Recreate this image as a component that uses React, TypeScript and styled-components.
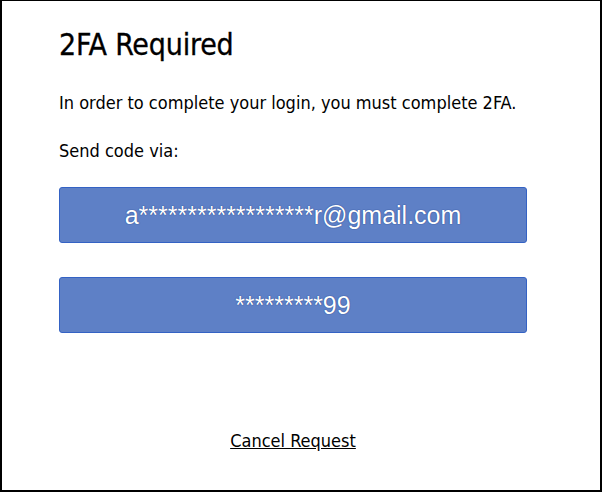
import React from 'react';
import styled, { createGlobalStyle } from 'styled-components';

const GlobalStyle = createGlobalStyle`
  html, body {
    margin: 0;
    padding: 0;
    background: #fff;
  }
`;

const Frame = styled.div`
  box-sizing: border-box;
  width: 602px;
  height: 492px;
  border: 2px solid #000;
  border-top-width: 1px;
  background: #fff;
  padding: 26px 0 0 57px;
  font-family: "DejaVu Sans Condensed", "DejaVu Sans", sans-serif;
  color: #000;
`;

const Content = styled.div`
  width: 468px;
  display: flex;
  flex-direction: column;
`;

const Title = styled.h1`
  margin: 0;
  font-size: 30px;
  font-weight: normal;
  line-height: 36px;
  letter-spacing: -0.2px;
  -webkit-text-stroke: 0.3px #000;
`;

const Text = styled.p`
  margin: 0;
  font-size: 18px;
  line-height: 20px;
`;

const Intro = styled(Text)`
  margin-top: 30px;
`;

const Prompt = styled(Text)`
  margin-top: 28px;
`;

const Options = styled.div`
  display: flex;
  flex-direction: column;
  gap: 34px;
  margin-top: 26px;
`;

const SendButton = styled.button`
  box-sizing: border-box;
  width: 468px;
  height: 56px;
  border: 1px solid #3462c4;
  border-radius: 3px;
  background: #5e80c6;
  color: #fff;
  font-family: "Liberation Sans", Arial, sans-serif;
  font-size: 25px;
  text-shadow: 0 0 1px rgba(20, 50, 130, 0.8), 0 0 1px rgba(20, 50, 130, 0.5);
  cursor: pointer;
  padding: 0;
`;

const CancelLink = styled.a`
  align-self: center;
  margin-top: 98px;
  font-size: 18px;
  line-height: 20px;
  color: #000;
  text-decoration: underline;
  cursor: pointer;
`;

export default function App() {
  return (
    <>
      <GlobalStyle />
      <Frame>
        <Content>
          <Title>2FA Required</Title>
          <Intro>In order to complete your login, you must complete 2FA.</Intro>
          <Prompt>Send code via:</Prompt>
          <Options>
            <SendButton>a******************r@gmail.com</SendButton>
            <SendButton>*********99</SendButton>
          </Options>
          <CancelLink>Cancel Request</CancelLink>
        </Content>
      </Frame>
    </>
  );
}
